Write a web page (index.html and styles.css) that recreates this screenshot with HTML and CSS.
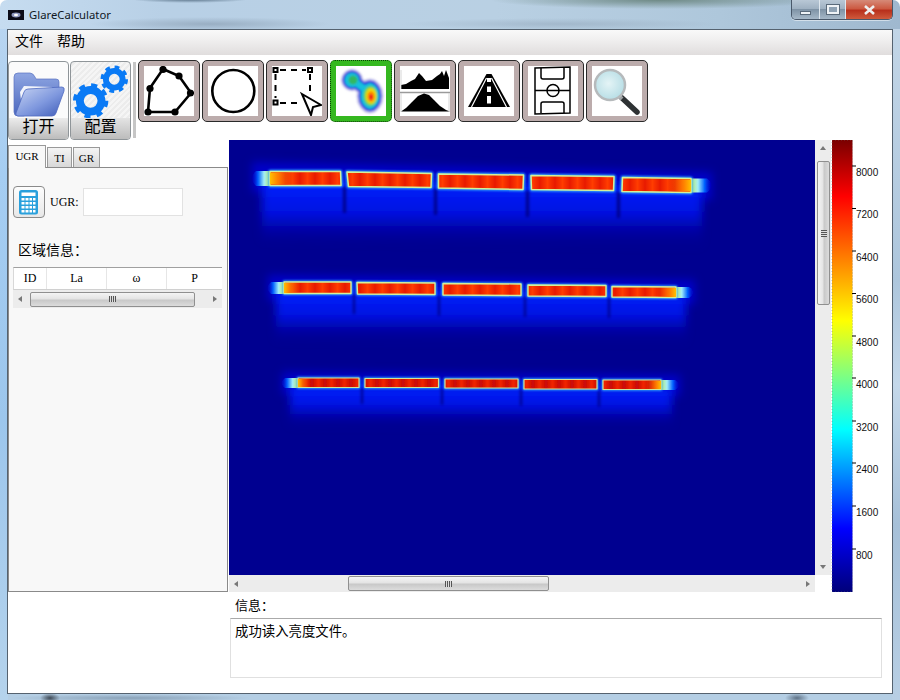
FILE: index.html
```html
<!DOCTYPE html>
<html lang="zh">
<head>
<meta charset="utf-8">
<title>GlareCalculator</title>
<link rel="stylesheet" href="styles.css">
</head>
<body>
<div class="window">
  <header class="titlebar">
    <svg class="app-icon" viewBox="0 0 16 10" width="16" height="10"><rect width="16" height="10" fill="#0c0c18"/><ellipse cx="8" cy="5" rx="4.5" ry="2.4" fill="#8f98c0"/><ellipse cx="8" cy="5" rx="2" ry="1.2" fill="#fff"/></svg>
    <span class="app-title">GlareCalculator</span>
    <div class="controls">
      <div class="ctl ctl-min"><span class="min-glyph"></span></div>
      <div class="ctl ctl-max"><span class="max-glyph"></span></div>
      <div class="ctl ctl-close">
        <svg viewBox="0 0 12 10" width="13" height="10"><path d="M1.5 1 L10.5 9 M10.5 1 L1.5 9" stroke="#eee" stroke-width="2.6" fill="none"/></svg>
      </div>
    </div>
  </header>

  <div class="client">
    <nav class="menubar"><span>文件</span><span>帮助</span></nav>

    <div class="toolbar">
      <div class="big-btn">
        <div class="big-icon">
          <svg viewBox="0 0 54 46" width="54" height="46">
            <defs>
              <linearGradient id="fb" x1="0" y1="0" x2="0" y2="1"><stop offset="0" stop-color="#8fa6e2"/><stop offset="1" stop-color="#4a66bd"/></linearGradient>
              <linearGradient id="ff" x1="0" y1="0" x2="1" y2="1"><stop offset="0" stop-color="#c9d5f3"/><stop offset=".55" stop-color="#7f98de"/><stop offset="1" stop-color="#3f5cb8"/></linearGradient>
            </defs>
            <path d="M2 5 Q2 1 6 1 L18 1 Q21 1 23 5 L24 7 L44 7 Q47 7 47 10 L47 20 L12 44 L6 44 Q2 44 2 40 Z" fill="url(#fb)" stroke="#5b74c2" stroke-width=".7"/>
            <path d="M8 20 L12 14 L40 15 L40 34 L10 36 Z" fill="#f2f4fb"/>
            <path d="M12 20 Q13 17 16 17 L50 15 Q53 15 52 19 L44 41 Q43 44 40 44 L6 44 Q3 44 4 41 Z" fill="url(#ff)" stroke="#4f6ac0" stroke-width=".8"/>
          </svg>
        </div>
        <div class="big-label">打开</div>
      </div>
      <div class="big-btn hatched">
        <div class="big-icon">
          <svg viewBox="0 0 60 58" width="60" height="58">
            <g fill="none" stroke="#0a7af5">
              <circle cx="20" cy="38" r="11" stroke-width="8"/>
              <circle cx="20" cy="38" r="15.5" stroke-width="5" stroke-dasharray="6 6.17"/>
              <circle cx="44" cy="16" r="8.5" stroke-width="6"/>
              <circle cx="44" cy="16" r="12" stroke-width="4" stroke-dasharray="4.7 4.72"/>
            </g>
          </svg>
        </div>
        <div class="big-label">配置</div>
      </div>
      <div class="sep"></div>
      <div class="tools">
        <div class="tool"><svg class="tool-img" viewBox="0 0 50 50"><path d="M19 3 L35 10 L47 27 L31 46 L4 46 L6 22 Z" fill="none" stroke="#000" stroke-width="2.6"/><g fill="#000"><circle cx="19" cy="3.5" r="3.6"/><circle cx="35" cy="10" r="3.6"/><circle cx="46.500" cy="27" r="3.600"/><circle cx="31" cy="46" r="3.600"/><circle cx="4" cy="46" r="3.600"/><circle cx="6" cy="22.500" r="3.600"/></g></svg></div>
        <div class="tool"><svg class="tool-img" viewBox="0 0 50 50"><circle cx="25.300" cy="25" r="21" fill="none" stroke="#000" stroke-width="2.600"/></svg></div>
        <div class="tool"><svg class="tool-img" viewBox="0 0 50 50"><path d="M8 4 H34 M38 8 V27 M8 37 H30 M3.500 8 V32" fill="none" stroke="#000" stroke-width="2" stroke-dasharray="6 5"/><g fill="#fff" stroke="#000" stroke-width="2"><rect x="1.500" y="2" width="4" height="4"/><rect x="36" y="2" width="4" height="4"/><rect x="1.500" y="34.500" width="4" height="4"/></g><path d="M30 28 L49 39 L41 41 L39 49 Z" fill="#fff" stroke="#000" stroke-width="2"/></svg></div>
        <div class="tool tool-active"><svg class="tool-img" viewBox="0 0 50 50"><defs><filter id="b1" x="-30%" y="-30%" width="160%" height="160%"><feGaussianBlur stdDeviation="1.200"/></filter></defs><g filter="url(#b1)"><g fill="#c4c0ea" stroke="#c4c0ea"><circle cx="16" cy="14" r="10.500"/><ellipse cx="34" cy="30" rx="13" ry="17"/><path d="M16 14 L30 24" stroke-width="14"/></g><g fill="#2038e0" stroke="#2038e0"><circle cx="16" cy="14" r="9"/><ellipse cx="34" cy="30" rx="11" ry="15"/><path d="M16 14 L30 24" stroke-width="11"/></g><g fill="#14c0dc" stroke="#14c0dc"><circle cx="16" cy="14" r="7"/><ellipse cx="34" cy="30" rx="9" ry="12.500"/><path d="M16 14 L30 24" stroke-width="7"/></g><circle cx="17" cy="14" r="4.500" fill="#30b860"/><ellipse cx="34.500" cy="30" rx="7" ry="10" fill="#60d040"/><ellipse cx="35" cy="30" rx="5.500" ry="8" fill="#ecdc10"/><ellipse cx="35" cy="30.500" rx="3.600" ry="5.500" fill="#ff8c00"/><ellipse cx="35" cy="31" rx="2" ry="3" fill="#f01818"/></g></svg></div>
        <div class="tool"><svg class="tool-img" viewBox="0 0 50 50"><path d="M1 23 V19 L6 18 L11 15 L15 13 L19 7 L22 10 L26 15 L32 14 L37 10 L40 8 L42 5 L44 10 L46 4 L49 12 V23 Z" fill="#000"/><path d="M0 26.500 H50" stroke="#9a9a9a" stroke-width="1.500"/><path d="M1 45.500 L6 42 L12 36 L18 30 L24 27.500 L29 29 L34 34 L40 40 L46 44 L50 45.500 Z" fill="#000"/><path d="M1 4 V23 M1 27 V46 M49 27 V46" stroke="#ccc" stroke-width=".8"/></svg></div>
        <div class="tool"><svg class="tool-img" viewBox="0 0 50 50"><path d="M22.500 8 H27.500 L46 41 H4 Z" fill="#000"/><path d="M22.500 12 L7.500 41 M27.500 12 L42.500 41" stroke="#fff" stroke-width="1.200"/><path d="M25 12 V16 M25 20.500 V26 M25 30 V37.500" stroke="#fff" stroke-width="4"/></svg></div>
        <div class="tool"><svg class="tool-img" viewBox="0 0 50 50"><g fill="none" stroke="#000" stroke-width="1.500"><path d="M7 2 L42 1 L42 47 L7 48 Z"/><path d="M7 24.500 H42"/><circle cx="25" cy="24.500" r="6"/><path d="M13 2 V11 Q13 13 15 13 H34 Q36 13 36 11 V2"/><path d="M13 47 V38 Q13 36 15 36 H34 Q36 36 36 38 V47"/></g></svg></div>
        <div class="tool"><svg class="tool-img" viewBox="0 0 50 50"><defs><radialGradient id="lens" cx=".45" cy=".45" r=".6"><stop offset="0" stop-color="#e4f4f6"/><stop offset="1" stop-color="#b4dce4"/></radialGradient></defs><path d="M30 32 L45 46" stroke="#2e3234" stroke-width="5.500" stroke-linecap="round"/><path d="M26 29 L30 33" stroke="#a0a4a6" stroke-width="4"/><circle cx="18" cy="19" r="15" fill="url(#lens)" stroke="#b6babc" stroke-width="2.500"/></svg></div>
      </div>
    </div>

    <div class="main">
      <aside class="side">
        <div class="tabs">
          <span class="tab tab-on">UGR</span>
          <span class="tab">TI</span>
          <span class="tab">GR</span>
        </div>
        <div class="panel">
          <div class="ugr-row">
            <div class="calc-btn">
              <svg viewBox="0 0 20 25" width="20" height="25"><rect width="19" height="24.500" rx="2.500" fill="#29a0dc"/><rect x="2.500" y="2.500" width="14" height="3.500" fill="#fff"/><g fill="#fff"><rect x="2.500" y="8" width="3" height="2.500"/><rect x="6.500" y="8" width="3" height="2.500"/><rect x="10.500" y="8" width="2.500" height="2.500"/><rect x="14" y="8" width="2.500" height="2.500"/><rect x="2.500" y="12" width="3" height="2.500"/><rect x="6.500" y="12" width="3" height="2.500"/><rect x="10.500" y="12" width="2.500" height="2.500"/><rect x="14" y="12" width="2.500" height="2.500"/><rect x="2.500" y="16" width="3" height="2.500"/><rect x="6.500" y="16" width="3" height="2.500"/><rect x="10.500" y="16" width="2.500" height="2.500"/><rect x="14" y="16" width="2.500" height="2.500"/><rect x="2.500" y="20" width="3" height="2.500"/><rect x="6.500" y="20" width="3" height="2.500"/><rect x="10.500" y="20" width="2.500" height="2.500"/><rect x="14" y="20" width="2.500" height="2.500"/></g></svg>
            </div>
            <span class="ugr-label">UGR:</span>
            <div class="ugr-input"></div>
          </div>
          <div class="area-title">区域信息：</div>
          <div class="grid-wrap">
            <div class="grid-head">
              <span class="col col-id">ID</span>
              <span class="col col-n">La</span>
              <span class="col col-n">ω</span>
              <span class="col col-p">P</span>
            </div>
            <div class="hscroll hscroll-small">
              <i class="arrow arrow-l"></i>
              <div class="spacer-a"></div>
              <div class="thumb-h thumb-small"><span class="grip-v"></span></div>
              <div class="spacer-b"></div>
              <i class="arrow arrow-r"></i>
            </div>
          </div>
        </div>
      </aside>

      <section class="work">
        <div class="viewer">
          <div class="scrollview">
            <svg class="heat" viewBox="229 140 586 435" width="586" height="435">
              <defs>
                <filter id="soft" x="-20%" y="-60%" width="140%" height="220%"><feGaussianBlur stdDeviation=".7"/></filter>
                <filter id="soft2" x="-10%" y="-40%" width="120%" height="180%"><feGaussianBlur stdDeviation="4"/></filter>
                <filter id="soft3" x="-300%" y="-10%" width="700%" height="120%"><feGaussianBlur stdDeviation="1.500"/></filter>
                <filter id="soft4" x="-30%" y="-60%" width="160%" height="220%"><feGaussianBlur stdDeviation="1.300"/></filter>
                <linearGradient id="down" x1="0" y1="0" x2="0" y2="1"><stop offset="0" stop-color="#0024ff"/><stop offset=".5" stop-color="#0010e0"/><stop offset="1" stop-color="#000090" stop-opacity="0"/></linearGradient>
                <linearGradient id="mot" gradientUnits="userSpaceOnUse" x1="0" x2="15" y1="0" y2="0" spreadMethod="repeat"><stop offset="0" stop-color="#e81a06"/><stop offset=".5" stop-color="#ff3c00"/><stop offset="1" stop-color="#e81a06"/></linearGradient>
                <linearGradient id="mot2" gradientUnits="userSpaceOnUse" x1="0" x2="13" y1="0" y2="0" spreadMethod="repeat"><stop offset="0" stop-color="#c80a08"/><stop offset=".5" stop-color="#f02400"/><stop offset="1" stop-color="#c80a08"/></linearGradient>
                <linearGradient id="underL" x1="0" y1="0" x2="1" y2="0"><stop offset="0" stop-color="#0000c8" stop-opacity=".3"/><stop offset=".3" stop-color="#0060ff"/><stop offset=".6" stop-color="#a0ecf8"/><stop offset=".85" stop-color="#c0f080"/><stop offset="1" stop-color="#f8e040"/></linearGradient>
                <linearGradient id="underR" x1="1" y1="0" x2="0" y2="0"><stop offset="0" stop-color="#0000c8" stop-opacity=".3"/><stop offset=".3" stop-color="#0060ff"/><stop offset=".6" stop-color="#a0ecf8"/><stop offset=".85" stop-color="#c0f080"/><stop offset="1" stop-color="#f8e040"/></linearGradient>
                <linearGradient id="overL" x1="0" y1="0" x2="1" y2="0"><stop offset="0" stop-color="#ffc000"/><stop offset=".25" stop-color="#ff8800"/><stop offset="1" stop-color="#f04000" stop-opacity="0"/></linearGradient>
                <linearGradient id="overR" x1="1" y1="0" x2="0" y2="0"><stop offset="0" stop-color="#ffc000"/><stop offset=".25" stop-color="#ff8800"/><stop offset="1" stop-color="#f04000" stop-opacity="0"/></linearGradient>
                <g id="row1" stroke-linejoin="round">
                  <path d="M270 171.500 L340.500 171.500 L341 185.500 L270 185.500 Z"/>
                  <path d="M347 172 L431.500 173.500 L431 187.500 L348.500 186.500 Z"/>
                  <path d="M438.500 174 L523.500 175 L523 189.500 L438.500 188 Z"/>
                  <path d="M531 175.500 L614 176.500 L613.500 190.500 L531.500 189.500 Z"/>
                  <path d="M622.500 177.500 L691 178.500 L691 192.500 L622 191.500 Z"/>
                </g>
                <g id="row2" stroke-linejoin="round">
                  <path d="M284 282 L351 282 L351 293.500 L284 293.500 Z"/>
                  <path d="M357 282.500 L435 283 L435 294.500 L357.500 294 Z"/>
                  <path d="M443 283.500 L521 284 L521 295.500 L443 295 Z"/>
                  <path d="M528 285 L606 285.500 L606 296.500 L528 296 Z"/>
                  <path d="M612 286.500 L676 287 L676 297.500 L612 297 Z"/>
                </g>
                <g id="row3" stroke-linejoin="round">
                  <path d="M298 378 L359 378 L359 387.500 L298 387.500 Z"/>
                  <path d="M365 378.500 L438.500 378.500 L438.500 387.500 L365 387.500 Z"/>
                  <path d="M445 379 L518 379 L518 388 L445 388 Z"/>
                  <path d="M524 379.500 L597 379.500 L597 389 L524 389 Z"/>
                  <path d="M603 380 L661 380 L661 389.500 L603 389.500 Z"/>
                </g>
              </defs>
              <rect x="229" y="140" width="586" height="435" fill="#000090"/>

              <g filter="url(#soft2)" fill="#0000c8">
                <path d="M252 162 L712 172 L712 200 L252 192 Z"/>
                <path d="M268 275 L695 280 L695 304 L268 300 Z"/>
                <path d="M282 372 L680 375 L680 396 L282 394 Z"/>
              </g>
              <g filter="url(#soft2)">
                <path d="M262 180 L702 187 L702 248 L262 240 Z" fill="url(#down)"/>
                <path d="M276 290 L686 294 L686 344 L276 340 Z" fill="url(#down)"/>
                <path d="M290 385 L672 387 L672 428 L290 426 Z" fill="url(#down)"/>
              </g>

              <g filter="url(#soft3)" fill="#000088">
                <rect x="343" y="187" width="3" height="26"/>
                <rect x="434" y="189" width="3" height="26"/>
                <rect x="526" y="191" width="3" height="26"/>
                <rect x="617" y="192" width="3" height="26"/>
                <rect x="353" y="294" width="2" height="20"/>
                <rect x="438" y="296" width="2" height="20"/>
                <rect x="524" y="297" width="2" height="20"/>
                <rect x="608" y="298" width="2" height="20"/>
                <rect x="361" y="388" width="2" height="16"/>
                <rect x="441" y="389" width="2" height="16"/>
                <rect x="520" y="390" width="2" height="16"/>
                <rect x="598" y="391" width="2" height="16"/>
              </g>

              <g filter="url(#soft)">
                <path d="M256 171 H272 V186 H256 Q248 178 256 171 Z" fill="url(#underL)"/>
                <path d="M689 178.500 H707 Q716 185 707 192.500 H689 Z" fill="url(#underR)"/>
                <path d="M271 282 H286 V294 H271 Q264 288 271 282 Z" fill="url(#underL)"/>
                <path d="M674 287 H689 Q698 292 689 298 H674 Z" fill="url(#underR)"/>
                <path d="M285 378 H300 V388 H285 Q278 383 285 378 Z" fill="url(#underL)"/>
                <path d="M659 380 H675 Q683 385 675 390 H659 Z" fill="url(#underR)"/>
              </g>

              <use href="#row1" fill="none" stroke="#30a8ff" stroke-width="3.500" filter="url(#soft4)"/>
              <use href="#row2" fill="none" stroke="#30a8ff" stroke-width="3" filter="url(#soft4)"/>
              <use href="#row3" fill="none" stroke="#30a8ff" stroke-width="2.600" filter="url(#soft4)"/>
              <use href="#row1" fill="url(#mot)" stroke="#d4f098" stroke-width="1.500" filter="url(#soft)"/>
              <use href="#row2" fill="url(#mot)" stroke="#d4f098" stroke-width="1.400" filter="url(#soft)"/>
              <use href="#row3" fill="url(#mot2)" stroke="#d0e498" stroke-width="1.200" filter="url(#soft)"/>

              <g filter="url(#soft)">
                <rect x="270" y="172.500" width="27" height="12" fill="url(#overL)"/>
                <rect x="666" y="179.500" width="25" height="12" fill="url(#overR)"/>
                <rect x="284" y="283" width="17" height="10" fill="url(#overL)"/>
                <rect x="656" y="288" width="20" height="9" fill="url(#overR)"/>
                <rect x="298" y="379" width="12" height="8" fill="url(#overL)"/>
                <rect x="645" y="381" width="16" height="8" fill="url(#overR)"/>
              </g>
            </svg>
            <div class="vscroll">
              <i class="arrow arrow-u"></i>
              <div class="thumb-v"><span class="grip-h"></span></div>
              <i class="arrow arrow-d"></i>
            </div>
            <div class="hscroll hscroll-main">
              <i class="arrow arrow-l"></i>
              <div class="spacer-c"></div>
              <div class="thumb-h thumb-main"><span class="grip-v"></span></div>
              <div class="spacer-d"></div>
              <i class="arrow arrow-r"></i>
            </div>
            <div class="corner"></div>
          </div>
          <svg class="colorbar" viewBox="831 140 59 452" width="59" height="452">
            <defs>
              <linearGradient id="jet" x1="0" y1="0" x2="0" y2="1">
                <stop offset="0" stop-color="#7a0000"/>
                <stop offset=".125" stop-color="#ff0000"/>
                <stop offset=".4" stop-color="#ffff00"/>
                <stop offset=".52" stop-color="#80ff80"/>
                <stop offset=".64" stop-color="#00ffff"/>
                <stop offset=".86" stop-color="#0000ff"/>
                <stop offset="1" stop-color="#00007a"/>
              </linearGradient>
            </defs>
            <rect x="832" y="140" width="20.500" height="452" fill="url(#jet)" stroke="#777" stroke-width=".5" stroke-dasharray="1 2"/>
            <path d="M852 166 H856 M852 208.500 H856 M852 251 H856 M852 293.500 H856 M852 336 H856 M852 378 H856 M852 421 H856 M852 463 H856 M852 506 H856 M852 549 H856" stroke="#000" stroke-width="1"/>
            <g class="cb-text">
              <text x="856" y="175.500">8000</text>
              <text x="856" y="218">7200</text>
              <text x="856" y="260.500">6400</text>
              <text x="856" y="303">5600</text>
              <text x="856" y="345.500">4800</text>
              <text x="856" y="388">4000</text>
              <text x="856" y="430.500">3200</text>
              <text x="856" y="473">2400</text>
              <text x="856" y="515.500">1600</text>
              <text x="856" y="558.500">800</text>
            </g>
          </svg>
        </div>
        <div class="info-label">信息：</div>
        <div class="info-box">成功读入亮度文件。</div>
      </section>
    </div>
  </div>
</div>
</body>
</html>
```
FILE: styles.css
```css
* { box-sizing: border-box; }
html, body { margin: 0; padding: 0; }
body {
  width: 900px;
  height: 700px;
  overflow: hidden;
  font-family: "Noto Sans CJK SC", "Noto Sans", sans-serif;
  color: #000;
}
svg { display: block; }

.window {
  width: 900px;
  height: 700px;
  display: flex;
  flex-direction: column;
  padding: 0 7px 6px;
  border-radius: 7px 7px 0 0;
  background:
    radial-gradient(ellipse 10px 5px at 50px 698px, #3f4a56 0, transparent 100%),
    radial-gradient(ellipse 12px 5px at 797px 698px, #5f7286 0, transparent 100%),
    radial-gradient(ellipse 120px 4px at 130px 698px, #8aa2b8 0, transparent 100%),
    radial-gradient(ellipse 60px 4px at 190px -1px, #50697f 0, transparent 100%),
    radial-gradient(ellipse 170px 9px at 660px 0, #6f8a86 0, transparent 100%),
    radial-gradient(ellipse 120px 7px at 210px 24px, rgba(140,160,180,.7) 0, transparent 100%),
    radial-gradient(ellipse 160px 6px at 560px 24px, rgba(150,170,190,.6) 0, transparent 100%),
    linear-gradient(90deg, #c6dcf0 0, #b8d0e6 18%, #b9d0e3 55%, #aec7db 80%, #9fb8cf 100%) 0 0 / 100% 29px no-repeat,
    linear-gradient(180deg, #bcd6f0 0, #a5cdf2 25%, #9cc6ec 60%, #b5d3ec 100%) 0 0 / 8px 100% no-repeat,
    linear-gradient(180deg, #c4d7e8 0, #adc6dc 40%, #c4d8ea 55%, #a6c0d8 75%, #b8cfe4 100%) 892px 0 / 8px 100% no-repeat,
    #b4cee4;
}

.titlebar {
  height: 29px;
  flex: none;
  display: flex;
  align-items: flex-start;
  padding-left: 1px;
}
.app-icon { margin-top: 10px; }
.app-title {
  margin: 6px 0 0 5px;
  font-family: "Noto Sans", sans-serif;
  font-size: 11.300px;
  line-height: 18px;
  color: #10181f;
}
.controls {
  margin-left: auto;
  width: 102px;
  height: 20px;
  display: flex;
  border: 1px solid #49586a;
  border-top: 0;
  border-radius: 0 0 5px 5px;
  overflow: hidden;
  box-shadow: 0 1px 0 rgba(255,255,255,.5);
}
.ctl { display: flex; align-items: center; justify-content: center; }
.ctl-min, .ctl-max {
  background: linear-gradient(180deg, #b9c8d6 0, #9fb1c2 45%, #7f93a6 50%, #a6b8c8 100%);
  border-right: 1px solid #dfe7ee;
}
.ctl-min { width: 28px; }
.ctl-max { width: 26px; }
.ctl-close {
  flex: 1;
  background: linear-gradient(180deg, #d68a78 0, #cc5a42 45%, #b8301c 55%, #cf5a3c 100%);
}
.min-glyph { width: 11px; height: 4px; background: #eef2f6; border: 1px solid #5a6a7a; margin-top: 6px; }
.max-glyph { width: 12px; height: 9px; border: 2px solid #eef2f6; outline: 1px solid #5a6a7a; background: #8fa2b4; }

.client {
  flex: 1;
  min-height: 0;
  display: flex;
  flex-direction: column;
  background: #fff;
  border: 1px solid #55626f;
}

.menubar {
  height: 25px;
  flex: none;
  display: flex;
  align-items: flex-start;
  gap: 14px;
  padding-left: 7px;
  font-size: 14px;
  line-height: 21px;
  background: linear-gradient(180deg, #f9f9f9 0, #f0efef 40%, #e0dddd 100%);
}

.toolbar {
  height: 85px;
  flex: none;
  display: flex;
  align-items: flex-start;
  padding-top: 5px;
}
.big-btn {
  width: 61px;
  height: 79px;
  margin-top: 1px;
  margin-right: 1px;
  display: flex;
  flex-direction: column;
  border: 1px solid #8f9599;
  border-radius: 4px;
  overflow: hidden;
  background: #fbfbfb;
}
.big-icon { height: 56px; flex: none; display: flex; align-items: flex-end; padding-left: 3px; }
.big-label {
  flex: 1;
  text-align: center;
  font-size: 16px;
  line-height: 15px;
  background: linear-gradient(180deg, #ececec 0, #bcbcbc 100%);
}
.hatched { background: repeating-linear-gradient(135deg, #f5f5f5 0, #f5f5f5 2px, #ececec 2px, #ececec 4px); }
.hatched .big-icon { padding-left: 0; height: 56px; align-items: flex-start; }
.hatched .big-label { background: linear-gradient(180deg, #e4e4e4 0, #bcbcbc 100%); }
.hatched svg { margin-top: 1px; }
.sep { width: 3px; height: 76px; margin: 2px 2px 0 1px; background: #c6c6c6; flex: none; }
.tools { display: flex; gap: 2px; }
.tool {
  width: 62px;
  height: 62px;
  padding: 5px;
  background: #bcacac;
  border: 1px solid #2a2a2a;
  border-radius: 5px;
}
.tool-img { width: 50px; height: 50px; background: #fff; }
.tool-active { background: #35b81f; border: 1px dotted #0c3a08; }

.main {
  flex: 1;
  min-height: 0;
  display: grid;
  grid-template-columns: 220px 1fr;
  column-gap: 1px;
}

.side { padding-top: 5px; height: 452px; display: flex; flex-direction: column; }
.tabs { display: flex; height: 22px; align-items: flex-end; gap: 1px; flex: none; position: relative; z-index: 1; }
.tab {
  font-family: "Liberation Serif", serif;
  font-size: 11px;
  height: 20px;
  line-height: 20px;
  padding: 0 5px;
  text-align: center;
  border: 1px solid #999;
  border-bottom: 0;
  background: linear-gradient(180deg, #f4f4f4, #d8d8d8);
}
.tab:nth-child(2) { width: 25px; padding: 0; }
.tab:nth-child(3) { width: 27px; padding: 0; }
.tab-on {
  width: 38px;
  padding: 0;
  height: 23px;
  line-height: 21px;
  background: #f8f8f8;
  margin-bottom: -1px;
}
.panel {
  flex: 1;
  background: #f8f8f8;
  border: 1px solid #8a8a8a;
  padding: 18px 4px 0 4px;
}
.ugr-row { display: flex; align-items: center; height: 32px; }
.calc-btn {
  width: 32px;
  height: 32px;
  border: 1px solid #8a8a8a;
  border-radius: 4px;
  background: linear-gradient(180deg, #fdfdfd, #e8e8e8);
  display: flex;
  align-items: center;
  justify-content: center;
}
.ugr-label {
  font-family: "Liberation Serif", serif;
  font-size: 12px;
  margin-left: 5px;
  width: 33px;
}
.ugr-input {
  width: 100px;
  height: 28px;
  background: #fff;
  border: 1px solid #e2e2e2;
}
.area-title {
  margin: 21px 0 0 5px;
  font-size: 14px;
  line-height: 20px;
}
.grid-wrap { margin-top: 8px; width: 209px; }
.grid-head {
  display: flex;
  height: 23px;
  background: #fff;
  border-top: 1px solid #a0a0a0;
  border-bottom: 1px solid #d0d0d0;
  border-left: 1px solid #d8d8d8;
  font-family: "Liberation Serif", serif;
  font-size: 12px;
  line-height: 21px;
  text-align: center;
}
.col { border-right: 1px solid #e6e6e6; }
.col-id { width: 33px; }
.col-n { width: 60px; }
.col-p { flex: 1; border-right: 0; }

.hscroll { display: flex; align-items: center; background: #ececec; }
.hscroll-small { height: 18px; }
.hscroll-main { height: 17px; grid-column: 1; }
.spacer-a { width: 8px; flex: none; }
.spacer-b { flex: 1; }
.spacer-c { width: 110px; flex: none; }
.spacer-d { flex: 1; }
.thumb-h {
  height: 15px;
  border: 1px solid #8f8f8f;
  border-radius: 2px;
  background: linear-gradient(180deg, #f4f4f4 0, #e4e4e4 45%, #c8c8c8 55%, #dcdcdc 100%);
  display: flex;
  align-items: center;
  justify-content: center;
}
.thumb-small { width: 165px; flex: none; }
.thumb-main { width: 201px; flex: none; }
.grip-v { width: 7px; height: 6px; background: repeating-linear-gradient(90deg, #555 0, #555 1px, #ddd 1px, #ddd 2px); }
.arrow { width: 0; height: 0; flex: none; display: block; }
.arrow-l { margin-left: 5px; border: 3px solid transparent; border-right: 4px solid #777; border-left: 0; }
.arrow-r { margin-right: 5px; border: 3px solid transparent; border-left: 4px solid #777; border-right: 0; }
.arrow-u { margin: 6px auto 0; border: 3px solid transparent; border-bottom: 4px solid #777; border-top: 0; }
.arrow-d { margin: 0 auto 6px; border: 3px solid transparent; border-top: 4px solid #777; border-bottom: 0; }

.work { display: flex; flex-direction: column; min-width: 0; }
.viewer { display: flex; height: 452px; flex: none; }
.scrollview { display: grid; grid-template-columns: 586px 16px; grid-template-rows: 435px 17px; width: 602px; }
.heat { grid-column: 1; grid-row: 1; }
.vscroll {
  grid-column: 2;
  grid-row: 1;
  background: #ececec;
  display: flex;
  flex-direction: column;
}
.thumb-v {
  margin: 11px 1px 0 2px;
  height: 144px;
  border: 1px solid #8f8f8f;
  border-radius: 2px;
  background: linear-gradient(90deg, #f4f4f4 0, #e4e4e4 45%, #c8c8c8 55%, #dcdcdc 100%);
  display: flex;
  align-items: center;
  justify-content: center;
  flex: none;
}
.vscroll .arrow-d { margin-top: auto; }
.grip-h { width: 6px; height: 7px; background: repeating-linear-gradient(180deg, #555 0, #555 1px, #ddd 1px, #ddd 2px); }
.corner { background: #fff; }
.colorbar { flex: none; }
.cb-text text { font-family: "Liberation Sans", sans-serif; font-size: 10px; fill: #111; }

.info-label {
  height: 26px;
  padding-left: 6px;
  padding-top: 3px;
  font-size: 13px;
  line-height: 20px;
}
.info-box {
  width: 652px;
  height: 60px;
  margin-left: 1px;
  padding: 2px 4px;
  background: #fff;
  border: 1px solid #e0e0e0;
  border-top-color: #aaa;
  font-size: 13.400px;
  line-height: 18px;
}
```
